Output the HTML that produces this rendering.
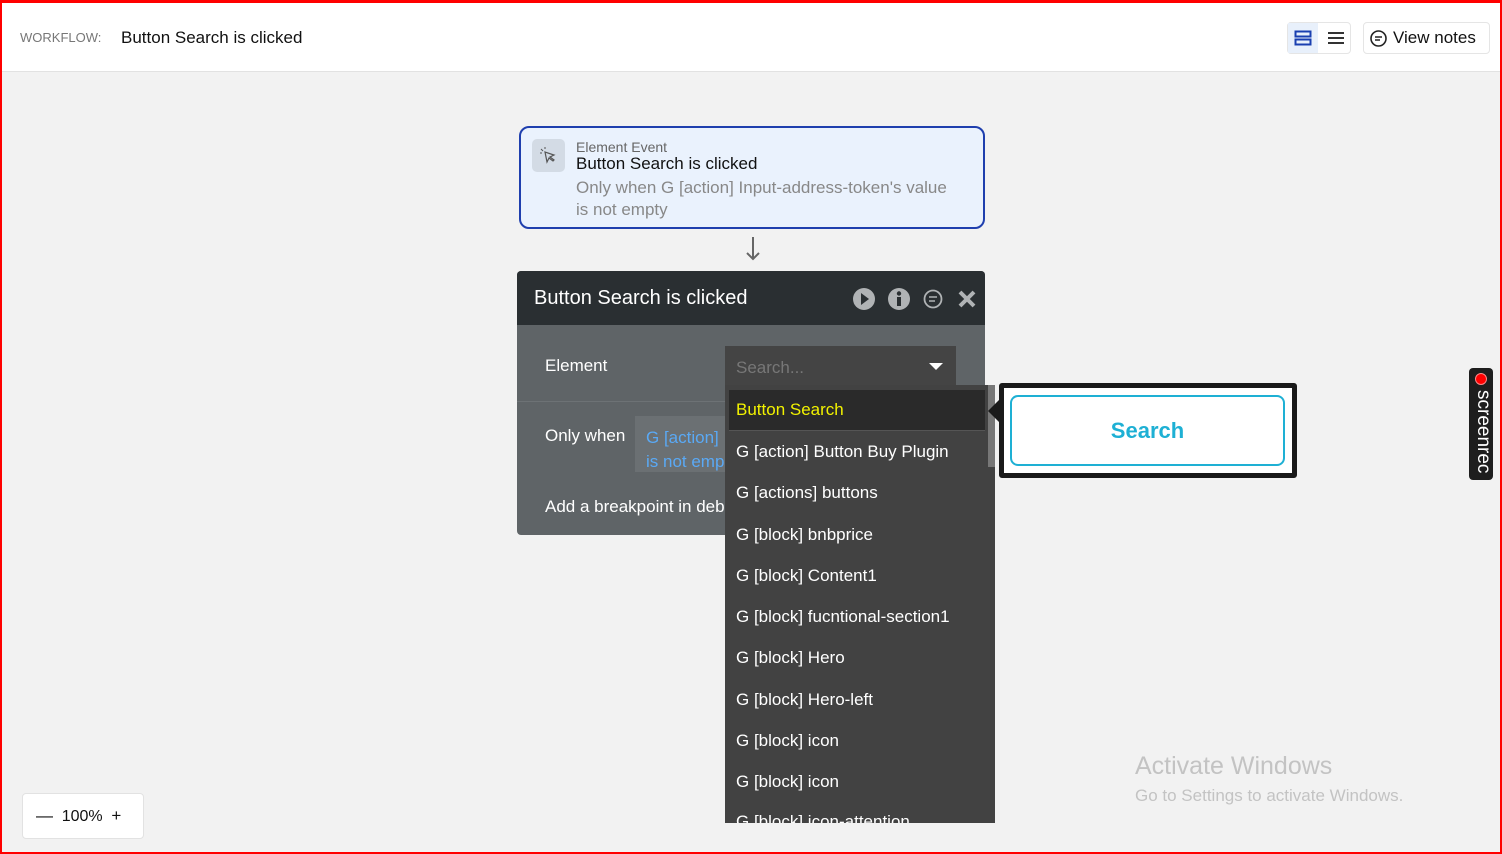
<!DOCTYPE html>
<html><head><meta charset="utf-8"><style>
*{box-sizing:border-box;margin:0;padding:0}
body{width:1502px;height:854px;overflow:hidden;font-family:"Liberation Sans",sans-serif;background:#f2f2f2;position:relative}
.frame{position:absolute;inset:0;border:2px solid #f00;border-top-width:3px;pointer-events:none;z-index:50}
.top{position:absolute;left:0;top:0;width:1502px;height:72px;background:#fff;border-bottom:1px solid #e2e2e2}
.abs{position:absolute}
.item{position:absolute;left:11px;font-size:17px;color:#fff;white-space:nowrap}
</style></head><body>
<div class="top">
<div class="abs" style="left:20px;top:30px;font-size:13px;color:#777">WORKFLOW:</div>
<div class="abs" style="left:121px;top:28px;font-size:17px;color:#111">Button Search is clicked</div>
<div class="abs" style="left:1287px;top:22px;width:64px;height:32px;border:1px solid #e5e5e5;border-radius:4px"></div>
<div class="abs" style="left:1288px;top:23px;width:30px;height:30px;background:#e8f0fb"></div>
<svg class="abs" style="left:1294px;top:30px" width="18" height="16"><rect x="1.5" y="1.5" width="15" height="5" fill="none" stroke="#1a3fb0" stroke-width="2"/><rect x="1.5" y="9.5" width="15" height="5" fill="none" stroke="#1a3fb0" stroke-width="2"/></svg>
<svg class="abs" style="left:1327px;top:31px" width="18" height="14"><path d="M1 2H17M1 7H17M1 12H17" stroke="#333" stroke-width="2"/></svg>
<div class="abs" style="left:1363px;top:22px;width:127px;height:32px;border:1px solid #e5e5e5;border-radius:4px"></div>
<svg class="abs" style="left:1369px;top:29px" width="19" height="19"><circle cx="9.5" cy="9.5" r="7.5" fill="none" stroke="#222" stroke-width="1.6"/><path d="M6 8H13M6 11H11" stroke="#222" stroke-width="1.5"/></svg>
<div class="abs" style="left:1393px;top:28px;font-size:17px;color:#111">View notes</div>
</div>

<div class="abs" style="left:519px;top:126px;width:466px;height:103px;background:#eaf2fd;border:2px solid #1f3fae;border-radius:10px"></div>
<div class="abs" style="left:532px;top:139px;width:33px;height:33px;background:#d3dbe5;border-radius:5px"></div>
<svg class="abs" style="left:539px;top:146px" width="18" height="18"><path d="M6 6L8 16L10 12L14 15L15 14L11 11L15 9Z" fill="none" stroke="#555" stroke-width="1.2"/><path d="M2 3L4 5M6 1V3M1 7H3" stroke="#555" stroke-width="1"/></svg>
<div class="abs" style="left:576px;top:139px;font-size:14px;color:#666">Element Event</div>
<div class="abs" style="left:576px;top:154px;font-size:17px;color:#111">Button Search is clicked</div>
<div class="abs" style="left:576px;top:177px;font-size:17px;color:#888;line-height:22px;width:385px">Only when G [action] Input-address-token's value is not empty</div>
<svg class="abs" style="left:744px;top:236px" width="18" height="26"><path d="M9 1V23M3 17L9 23L15 17" fill="none" stroke="#666" stroke-width="2"/></svg>

<div class="abs" style="left:517px;top:271px;width:468px;height:264px;background:#5f6467;border-radius:4px;overflow:hidden">
<div style="height:54px;background:#2a2f32"></div>
<div class="abs" style="left:0;top:130px;width:468px;height:1px;background:#6d7275"></div>
</div>
<div class="abs" style="left:534px;top:287px;font-size:20px;color:#fff">Button Search is clicked</div>
<svg class="abs" style="left:852px;top:287px" width="130" height="24"><circle cx="12" cy="12" r="11" fill="#b0b3b5"/><path d="M9 6L17 12L9 18Z" fill="#2a2f32"/><circle cx="47" cy="12" r="11" fill="#b0b3b5"/><rect x="45" y="10" width="4" height="9" fill="#2a2f32"/><circle cx="47" cy="6.5" r="2.2" fill="#2a2f32"/><circle cx="81" cy="12" r="8.5" fill="none" stroke="#b0b3b5" stroke-width="1.8"/><path d="M77 10H85M77 14H83" stroke="#b0b3b5" stroke-width="1.5"/><path d="M108 5L122 19M122 5L108 19" stroke="#b0b3b5" stroke-width="4"/></svg>
<div class="abs" style="left:545px;top:356px;font-size:17px;color:#fff">Element</div>
<div class="abs" style="left:545px;top:426px;font-size:17px;color:#fff">Only when</div>
<div class="abs" style="left:635px;top:416px;width:95px;height:56px;background:#6b7073"></div>
<div class="abs" style="left:646px;top:426px;font-size:17px;color:#5aa9f5;line-height:24px">G [action]<br>is not emp</div>
<div class="abs" style="left:545px;top:497px;font-size:17px;color:#fff">Add a breakpoint in deb</div>

<div class="abs" style="left:725px;top:346px;width:231px;height:42px;background:#444"></div>
<div class="abs" style="left:736px;top:358px;font-size:17px;color:#777">Search...</div>
<svg class="abs" style="left:929px;top:363px" width="14" height="8"><path d="M0 0H14L7 7Z" fill="#fff"/></svg>
<div class="abs" style="left:725px;top:385px;width:270px;height:438px;background:#424242;overflow:hidden">
<div class="abs" style="left:4px;top:5px;width:256px;height:41px;background:#2a2a2a;border-bottom:1px solid #555"></div>
<div class="abs" style="left:263px;top:0;width:7px;height:82px;background:#777"></div>
<div class="item" style="top:15px;color:#f2f200">Button Search</div>
<div class="item" style="top:57px">G [action] Button Buy Plugin</div>
<div class="item" style="top:98px">G [actions] buttons</div>
<div class="item" style="top:140px">G [block] bnbprice</div>
<div class="item" style="top:181px">G [block] Content1</div>
<div class="item" style="top:222px">G [block] fucntional-section1</div>
<div class="item" style="top:263px">G [block] Hero</div>
<div class="item" style="top:305px">G [block] Hero-left</div>
<div class="item" style="top:346px">G [block] icon</div>
<div class="item" style="top:387px">G [block] icon</div>
<div class="item" style="top:427px">G [block] icon-attention</div>
</div>

<svg class="abs" style="left:987px;top:398px" width="14" height="26"><path d="M14 0V26L1 13Z" fill="#1a1a1a"/></svg>
<div class="abs" style="left:999px;top:383px;width:298px;height:95px;background:#fff;border:5px solid #1a1a1a;border-radius:3px"></div>
<div class="abs" style="left:1010px;top:395px;width:275px;height:71px;border:2px solid #1eb0d4;border-radius:8px;color:#1eb0d4;font-size:22px;font-weight:bold;text-align:center;line-height:67px">Search</div>

<div class="abs" style="left:1469px;top:368px;width:24px;height:112px;background:#1e1e1e;border-radius:4px"></div>
<div class="abs" style="left:1475px;top:373px;width:12px;height:12px;border-radius:50%;background:#f00;border:1px solid #f88"></div>
<div class="abs" style="left:1470px;top:390px;width:24px;height:88px;color:#fff;font-size:19px;writing-mode:vertical-rl;line-height:22px">screenrec</div>

<div class="abs" style="left:1135px;top:752px;font-size:25px;color:#c3c3c3">Activate Windows</div>
<div class="abs" style="left:1135px;top:786px;font-size:17px;color:#c3c3c3">Go to Settings to activate Windows.</div>

<div class="abs" style="left:22px;top:793px;width:122px;height:46px;background:#fff;border:1px solid #e2e2e2;border-radius:4px"></div>
<div class="abs" style="left:36px;top:806px;font-size:17px;color:#111;word-spacing:4px">— <span style="font-size:16px">100%</span> +</div>
<div class="frame"></div>
</body></html>
